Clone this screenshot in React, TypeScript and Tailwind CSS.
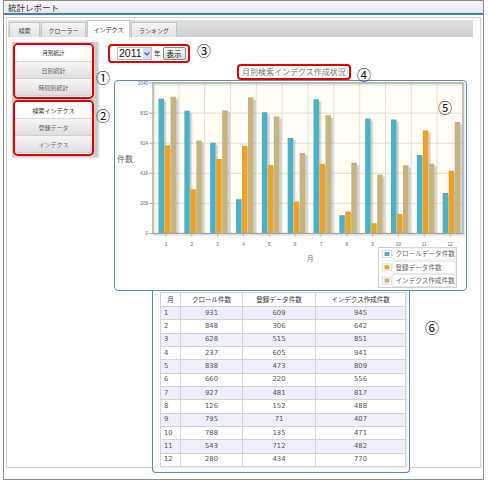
import React from 'react'

const JP = "font-['Noto_Sans_CJK_JP',sans-serif]"

const data: [number, number, number, number][] = [
  [1, 931, 609, 945],
  [2, 848, 306, 642],
  [3, 628, 515, 851],
  [4, 237, 605, 941],
  [5, 838, 473, 809],
  [6, 660, 220, 556],
  [7, 927, 481, 817],
  [8, 126, 152, 488],
  [9, 795, 71, 407],
  [10, 788, 135, 471],
  [11, 543, 712, 482],
  [12, 280, 434, 770],
]

const seriesColors = ['#4bb2c5', '#eaa228', '#c5b47f']
const seriesNames = ['クロールデータ件数', '登録データ件数', 'インデクス作成件数']

function Chart() {
  const px0 = 38
  const py0 = 2
  const pw = 310
  const ph = 150.5
  const max = 1040
  const colW = pw / 12
  const y = (v: number) => py0 + ph - (v / max) * ph
  const ticks = [0, 208, 416, 624, 832, 1040]

  return (
    <svg width={352} height={209} className="block">
      <rect x={px0} y={py0} width={pw} height={ph} fill="#fffdf6" />
      {/* グリッド */}
      {ticks.map((t) => (
        <line key={'h' + t} x1={px0} x2={px0 + pw} y1={y(t)} y2={y(t)} stroke="#e4e1d6" strokeWidth={1} />
      ))}
      {Array.from({ length: 11 }, (_, i) => (
        <line
          key={'v' + i}
          x1={px0 + (i + 1) * colW}
          x2={px0 + (i + 1) * colW}
          y1={py0}
          y2={py0 + ph}
          stroke="#e4e1d6"
          strokeWidth={1}
        />
      ))}
      {/* 棒 */}
      {data.map(([m, ...vals], i) =>
        vals.map((v, s) => {
          const bx = px0 + i * colW + 5.5 + s * 6
          const by = y(v)
          return (
            <g key={m + '-' + s}>
              <rect x={bx + 5.5} y={by + 2} width={2.5} height={py0 + ph - by - 2} fill="rgba(0,0,0,0.13)" />
              <rect x={bx + 5.5} y={by + 3} width={1.2} height={py0 + ph - by - 3} fill="rgba(0,0,0,0.08)" />
              <rect x={bx} y={by} width={5.5} height={py0 + ph - by} fill={seriesColors[s]} />
            </g>
          )
        }),
      )}
      {/* 枠 */}
      <rect x={px0 + 1.5} y={py0 + 1.5} width={pw} height={ph} fill="none" stroke="rgba(0,0,0,0.08)" strokeWidth={2} />
      <rect x={px0} y={py0} width={pw} height={ph} fill="none" stroke="#a3a3a3" strokeWidth={1.3} />
      {/* Y軸 */}
      {ticks.map((t) => (
        <g key={'yl' + t}>
          <line x1={px0 - 4} x2={px0} y1={y(t)} y2={y(t)} stroke="#999" strokeWidth={0.8} />
          <text
            x={px0 - 5}
            y={y(t) + 1.6}
            textAnchor="end"
            fontSize={4.6}
            fill="#666"
            fontFamily="Liberation Sans, sans-serif"
          >
            {t}
          </text>
        </g>
      ))}
      {/* X軸 */}
      {data.map(([m], i) => (
        <g key={'xl' + m}>
          <line
            x1={px0 + (i + 0.5) * colW}
            x2={px0 + (i + 0.5) * colW}
            y1={py0 + ph}
            y2={py0 + ph + 3}
            stroke="#aaa"
            strokeWidth={0.8}
          />
          <text
            x={px0 + (i + 0.5) * colW}
            y={164.5}
            textAnchor="middle"
            fontSize={4.6}
            fill="#666"
            fontFamily="Liberation Sans, sans-serif"
          >
            {m}
          </text>
        </g>
      ))}
      <text x={2} y={81} fontSize={8} fill="#666" fontFamily="Noto Sans CJK JP, sans-serif">
        件数
      </text>
      <text x={192} y={180} fontSize={6.5} fill="#666" fontFamily="Noto Sans CJK JP, sans-serif">
        月
      </text>
      {/* 凡例 */}
      <rect x={263.5} y={166.5} width={78} height={40} fill="#fff" stroke="#cfcfcf" />
      {seriesNames.map((n, s) => {
        const cy = 173 + s * 13.3
        return (
          <g key={n}>
            <rect x={278} y={cy - 6} width={62} height={12} fill="#fff" stroke="#e2e2e2" strokeWidth={0.8} />
            <rect x={267.5} y={cy - 3.5} width={9} height={7} fill="#fff" stroke="#d6d6d6" strokeWidth={0.8} />
            <rect x={269.5} y={cy - 2} width={5} height={4} fill={seriesColors[s]} />
            <text x={280.5} y={cy + 2.4} fontSize={6.6} fill="#666" fontFamily="Noto Sans CJK JP, sans-serif">
              {n}
            </text>
          </g>
        )
      })}
    </svg>
  )
}

function SideButton({ label, active, bold }: { label: string; active?: boolean; bold?: boolean }) {
  return (
    <div
      className={
        active
          ? 'flex h-[17px] items-center justify-center border-b border-[#d8d8d8] bg-white text-[5.5px] text-[#222]'
          : bold
            ? 'flex h-[17px] items-center justify-center border-b border-[#d8d8d8] bg-white text-[6px] text-[#222]'
            : 'flex h-[17px] items-center justify-center border-b border-[#d0d0d0] bg-gradient-to-b from-[#f6f6f6] to-[#dedede] text-[6px] text-[#666]'
      }
    >
      {label}
    </div>
  )
}

function Circled({ ch, className }: { ch: string; className: string }) {
  return (
    <span className={'absolute flex h-[16px] w-[16px] items-center justify-center text-[14px] leading-none text-[#111] ' + JP + ' ' + className}>
      {ch}
    </span>
  )
}

export default function App() {
  return (
    <div className={'relative h-[485px] w-[488px] overflow-hidden bg-white ' + JP}>
      {/* 外枠 */}
      <div className="ml-[3px] h-[480px] w-[481px] border border-[#8c8c8c] bg-white">
        <div className="flex h-[14px] items-center border-b-2 border-[#3b7dd8] bg-gradient-to-b from-[#f7f7f7] to-[#e9e9e9] pl-[4px] text-[8.5px] leading-none text-[#333]">
          統計レポート
        </div>
        <div className="ml-[2px] mt-[2px] h-[451px] w-[475px] border border-[#d2d2d2]">
          {/* タブ */}
          <div className="ml-[1px] mt-[2px] flex h-[17px] w-[465px] items-end gap-[1px] bg-gradient-to-b from-[#e2e2e2] to-[#cfcfcf] pl-[1px] text-[6px] text-[#444]">
            <div className="flex h-[15px] w-[31px] items-center justify-center border border-b-0 border-[#c4c4c4] bg-gradient-to-b from-[#f4f4f4] to-[#e2e2e2]">
              検索
            </div>
            <div className="flex h-[15px] w-[45px] items-center justify-center border border-b-0 border-[#c4c4c4] bg-gradient-to-b from-[#f4f4f4] to-[#e2e2e2]">
              クローラー
            </div>
            <div className="flex h-[17px] w-[43px] items-center justify-center border border-b-0 border-[#c4c4c4] bg-white text-[#222]">
              インデクス
            </div>
            <div className="flex h-[15px] w-[46px] items-center justify-center border border-b-0 border-[#c4c4c4] bg-gradient-to-b from-[#f4f4f4] to-[#e2e2e2]">
              ランキング
            </div>
          </div>

          <div className="mt-[5px] flex items-start">
            {/* サイドメニュー */}
            <div className="ml-[5px] flex h-[115px] w-[86px] flex-col gap-[1px] bg-[#cdcdcd] pl-[1px] pt-[1px] shadow-[1px_1px_2px_rgba(0,0,0,0.15)]">
              <div className="h-[56px] w-[81px] overflow-hidden rounded-[5px] border-2 border-[#e60000] bg-white">
                <SideButton label="月別統計" active />
                <SideButton label="日別統計" />
                <SideButton label="時間別統計" />
              </div>
              <div className="h-[56px] w-[81px] overflow-hidden rounded-[5px] border-2 border-[#e60000] bg-white">
                <SideButton label="検索インデクス" bold />
                <SideButton label="登録データ" />
                <SideButton label="インデクス" />
              </div>
            </div>

            {/* メイン */}
            <div className="ml-[10px] flex flex-col">
              <div className="mt-[2px] flex h-[19px] w-[82px] items-center gap-[2px] rounded-[4px] border-2 border-[#e60000] pl-[7px]">
                <div className="flex h-[13px] w-[35px] items-center border border-[#c0c0c0] bg-white">
                  <span className="flex-1 pl-[1px] font-['Liberation_Sans',sans-serif] text-[10.5px] leading-none text-[#111]">2011</span>
                  <span className="flex h-[11px] w-[8px] items-center justify-center bg-[#cfdff5]">
                    <svg width="6" height="4" viewBox="0 0 6 4">
                      <path d="M0.5 0.5 L3 3 L5.5 0.5" fill="none" stroke="#3b5d9a" strokeWidth="1.2" />
                    </svg>
                  </span>
                </div>
                <span className="text-[6.5px] leading-none text-[#222]">年</span>
                <span className="flex h-[13px] w-[23px] items-center justify-center rounded-[2px] border border-[#8a8a8a] bg-gradient-to-b from-[#fbfbfb] to-[#dcdcdc] text-[7.5px] leading-none text-[#111]">
                  表示
                </span>
              </div>

              <div className="ml-[129px] mt-[1px] flex h-[16px] w-[114px] items-center justify-center rounded-[4px] border-2 border-[#e60000] text-[8px] leading-none text-[#777]">
                月別検索インデクス作成状況
              </div>

              <div className="ml-[6px] h-[211px] w-[353px] rounded-[4px] border border-[#5a87c8] bg-white">
                <Chart />
              </div>

              {/* 表 */}
              <div className="ml-[44px] h-[182px] w-[258px] rounded-b-[4px] border-x border-b border-[#5a87c8] bg-white pl-[7px] pt-[1px]">
                <table className="w-[245px] table-fixed border-collapse border border-[#cfcfcf] shadow-[1px_1px_2px_rgba(0,0,0,0.12)]">
                  <colgroup>
                    <col className="w-[20px]" />
                    <col className="w-[62px]" />
                    <col className="w-[73px]" />
                    <col className="w-[90px]" />
                  </colgroup>
                  <thead>
                    <tr className="h-[14px] bg-white text-[6.5px] leading-none text-[#333]">
                      <th className="border border-[#d4d4d4] p-0 font-normal">月</th>
                      <th className="border border-[#d4d4d4] p-0 font-normal">クロール件数</th>
                      <th className="border border-[#d4d4d4] p-0 font-normal">登録データ件数</th>
                      <th className="border border-[#d4d4d4] p-0 font-normal">インデクス作成件数</th>
                    </tr>
                  </thead>
                  <tbody className="font-['DejaVu_Sans',sans-serif] text-[6.8px] leading-none text-[#555]">
                    {data.map(([m, a, b, c]) => (
                      <tr key={m} className={m % 2 === 1 ? 'h-[13.33px] bg-[#eeeefd]' : 'h-[13.33px] bg-white'}>
                        <td className="border border-[#d4d4d4] p-0 pl-[3px] text-left">{m}</td>
                        <td className="border border-[#d4d4d4] p-0 text-center">{a}</td>
                        <td className="border border-[#d4d4d4] p-0 text-center">{b}</td>
                        <td className="border border-[#d4d4d4] p-0 text-center">{c}</td>
                      </tr>
                    ))}
                  </tbody>
                </table>
              </div>
            </div>
          </div>
        </div>
      </div>

      {/* 注記番号 */}
      <Circled ch="①" className="left-[95px] top-[69px]" />
      <Circled ch="②" className="left-[95px] top-[107px]" />
      <Circled ch="③" className="left-[196px] top-[42px]" />
      <Circled ch="④" className="left-[356px] top-[66px]" />
      <Circled ch="⑤" className="left-[437px] top-[99px]" />
      <Circled ch="⑥" className="left-[424px] top-[319px]" />
    </div>
  )
}
